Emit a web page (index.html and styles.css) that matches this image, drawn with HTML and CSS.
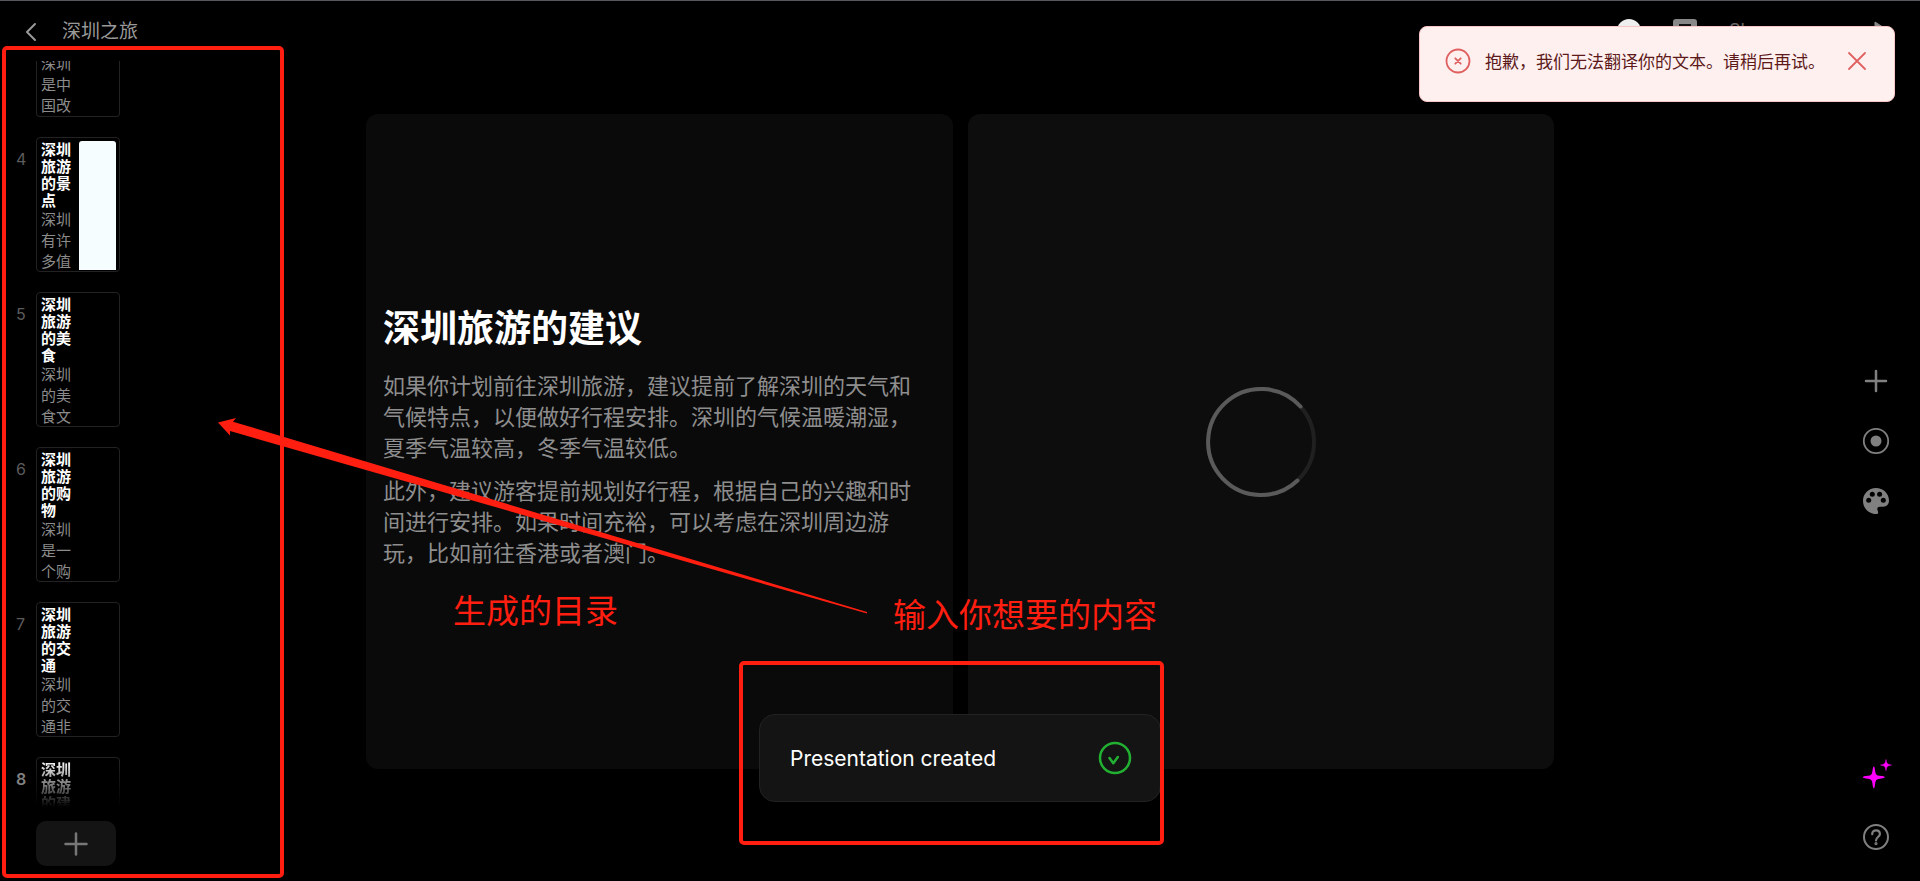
FILE: index.html
```html
<!DOCTYPE html>
<html lang="zh-CN">
<head>
<meta charset="utf-8">
<title>深圳之旅</title>
<link rel="stylesheet" href="styles.css">
</head>
<body>
<div class="app">
  <aside class="sidebar">
    <header class="topbar">
      <button class="icon-btn back" aria-label="Back"><svg width="12" height="20" viewBox="0 0 12 20"><path d="M10 2 2 10l8 8" fill="none" stroke="currentColor" stroke-width="2" stroke-linecap="round" stroke-linejoin="round"/></svg></button>
      <h1 class="deck-title">深圳之旅</h1>
    </header>
    <ol class="slides">
      <li class="slide"><span class="num"></span><div class="thumb cut"><p class="thumb-body">深圳是中国改</p></div></li>
      <li class="slide"><span class="num">4</span><div class="thumb"><div><h2 class="thumb-title">深圳旅游的景点</h2><p class="thumb-body">深圳有许多值</p></div><i class="thumb-image"></i></div></li>
      <li class="slide"><span class="num">5</span><div class="thumb"><div><h2 class="thumb-title">深圳旅游的美食</h2><p class="thumb-body">深圳的美食文</p></div></div></li>
      <li class="slide"><span class="num">6</span><div class="thumb"><div><h2 class="thumb-title">深圳旅游的购物</h2><p class="thumb-body">深圳是一个购</p></div></div></li>
      <li class="slide"><span class="num">7</span><div class="thumb"><div><h2 class="thumb-title">深圳旅游的交通</h2><p class="thumb-body">深圳的交通非</p></div></div></li>
      <li class="slide"><span class="num current">8</span><div class="thumb fading"><div><h2 class="thumb-title">深圳旅游的建</h2></div></div></li>
    </ol>
    <button class="add-slide" aria-label="Add slide"><svg width="24" height="24" viewBox="0 0 24 24"><path d="M12 1.500v21M1.500 12h21" stroke="currentColor" stroke-width="2.500" stroke-linecap="round"/></svg></button>
  </aside>

  <main class="stage">
    <section class="panel text-panel">
      <h2 class="heading">深圳旅游的建议</h2>
      <p class="para">如果你计划前往深圳旅游，建议提前了解深圳的天气和气候特点，以便做好行程安排。深圳的气候温暖潮湿，夏季气温较高，冬季气温较低。</p>
      <p class="para">此外，建议游客提前规划好行程，根据自己的兴趣和时间进行安排。如果时间充裕，可以考虑在深圳周边游玩，比如前往香港或者澳门。</p>
    </section>
    <section class="panel media-panel">
      <svg width="110" height="110" viewBox="0 0 110 110" fill="none" stroke-width="4" stroke-linecap="round"><circle cx="55" cy="55" r="53" stroke="#202020"/><path d="M91.500 93.500A53 53 0 1 1 94.500 19.500" stroke="#5a5a5a"/></svg>
    </section>
  </main>

  <aside class="rail">
    <div class="actions">
      <span class="avatar"></span>
      <button class="icon-btn" aria-label="Comments"><svg width="24" height="24" viewBox="0 0 24 24"><path d="M3 0h18a3 3 0 0 1 3 3v14a3 3 0 0 1-3 3H9l-5 4v-4H3a3 3 0 0 1-3-3V3a3 3 0 0 1 3-3Z" fill="#888"/><path d="M6 6h12M6 11h12" stroke="#111" stroke-width="2"/></svg></button>
      <button class="share">Share</button>
      <button class="icon-btn play" aria-label="Play"><svg width="16" height="20" viewBox="0 0 16 20"><path d="M1 1l14 9-14 9Z" fill="#888" stroke="#888" stroke-linejoin="round"/></svg></button>
    </div>
    <div class="tools">
      <button class="icon-btn" aria-label="Add"><svg width="28" height="28" viewBox="0 0 28 28"><path d="M14 4v20M4 14h20" stroke="currentColor" stroke-width="2.500" stroke-linecap="round"/></svg></button>
      <button class="icon-btn" aria-label="Record"><svg width="28" height="28" viewBox="0 0 28 28"><circle cx="14" cy="14" r="12.200" fill="none" stroke="currentColor" stroke-width="1.800"/><circle cx="14" cy="14" r="5.500" fill="currentColor"/></svg></button>
      <button class="icon-btn" aria-label="Theme"><svg width="28" height="28" viewBox="0 0 28 28"><path d="M14 1C6.600 1 1 6.600 1 14c0 7.200 5.700 13 13 13 1.300 0 2.200-.6 2.200-1.600 0-1.100-.9-2-.9-3.400 0-1.400 1-2.200 2.400-2.200h3.500c3.500 0 5.800-2.500 5.800-6.200C27 6.400 21 1 14 1Z" fill="currentColor"/><g fill="#000"><circle cx="6.700" cy="13.200" r="2.500"/><circle cx="10.300" cy="7.200" r="2.500"/><circle cx="17.600" cy="7.200" r="2.500"/><circle cx="21.300" cy="13.200" r="2.500"/></g></svg></button>
    </div>
    <div class="tools bottom">
      <button class="icon-btn" aria-label="AI"><svg width="28" height="28" viewBox="0 0 28 28" fill="#f0f"><path d="M11.800 3.500c.7 0 1 2 1.400 4.700.3 3 1.300 4.200 4.300 4.600 3.500.4 5.300.7 5.300 1.500s-1.800 1-5.300 1.400c-3 .4-4 1.600-4.300 4.600-.4 3.200-.7 5-1.400 5s-1-1.800-1.400-5c-.3-3-1.300-4.200-4.300-4.600-3.500-.4-5.300-.6-5.300-1.400s1.800-1.100 5.300-1.500c3-.4 4-1.600 4.300-4.600.4-2.700.7-4.700 1.400-4.700Z"/><path d="M24 -3.500c.5 3.900 1.300 4.900 5.500 5.600-4.200.7-5 1.700-5.500 5.600-.5-3.900-1.300-4.900-5.500-5.600 4.200-.7 5-1.700 5.500-5.600Z" stroke="#f0f" stroke-width=".5"/></svg></button>
      <button class="icon-btn" aria-label="Help"><svg width="28" height="28" viewBox="0 0 28 28" fill="none" stroke="currentColor" stroke-width="2"><circle cx="14" cy="14" r="12"/><path d="M10.200 11.200c0-2.300 1.700-3.900 3.900-3.900s3.800 1.500 3.800 3.600c0 3-3.900 3.200-3.900 6.500" stroke-width="2.200" stroke-linecap="round"/><circle cx="14" cy="20.600" r=".6"/></svg></button>
    </div>
  </aside>
</div>

<div class="toast" role="status">
  <span>Presentation created</span>
  <svg width="34" height="34" viewBox="0 0 34 34" fill="none" stroke="#22b032" stroke-width="2.500" stroke-linecap="round" stroke-linejoin="round"><circle cx="17" cy="17" r="15"/><path d="M11.500 17l3.800 5.200 4.500-6.200"/></svg>
</div>

<div class="alert" role="alert">
  <svg width="26" height="26" viewBox="0 0 26 26" fill="none" stroke="#e06060" stroke-width="1.800" stroke-linecap="round"><circle cx="13" cy="13" r="11.500"/><path d="M10.300 10.300l5.400 5.400M15.700 10.300l-5.400 5.400"/></svg>
  <span class="alert-text">抱歉，我们无法翻译你的文本。请稍后再试。</span>
  <button class="icon-btn close" aria-label="关闭"><svg width="18" height="18" viewBox="0 0 18 18"><path d="M1 1l16 16M17 1L1 17" stroke="#e06060" stroke-width="1.800" stroke-linecap="round"/></svg></button>
</div>

<div class="frame frame-list"></div>
<div class="frame frame-toast"></div>
<svg class="arrow" width="650" height="196" viewBox="0 0 650 196"><path d="M0 4.500 18 0l-3 3.700L649 194v1.500L12 13v4.500Z" fill="#ff1e10"/></svg>
<span class="note note-list">生成的目录</span>
<span class="note note-input">输入你想要的内容</span>
</body>
</html>
```
FILE: styles.css
```css
* { box-sizing: border-box; }

body {
  margin: 0;
  background: #000;
  color: #999;
  font-family: Inter, "Noto Sans CJK SC", sans-serif;
  overflow: hidden;
}

h1, h2, p, ol { margin: 0; padding: 0; }
svg { display: block; overflow: visible; }
button { border: 0; padding: 0; background: none; color: inherit; font: inherit; }

.app {
  display: grid;
  grid-template-columns: 366px 1fr 366px;
  height: 100vh;
  border-top: 1px solid #56585c;
}

.sidebar {
  display: flex;
  flex-direction: column;
  min-height: 0;
  padding-bottom: 15px;
}
.topbar {
  display: flex;
  align-items: center;
  gap: 25px;
  height: 60px;
  flex: none;
  padding: 2px 0 0 25px;
}
.deck-title { font-size: 19px; font-weight: 400; line-height: 28px; }

.slides {
  flex: 1;
  min-height: 0;
  overflow: hidden;
  list-style: none;
  display: flex;
  flex-direction: column;
  gap: 20px;
}
.slide { display: flex; align-items: flex-start; padding-left: 16px; }
.num { width: 20px; padding-top: 12px; font-size: 16px; line-height: 20px; color: #5c5c5c; }
.current { color: #808080; font-weight: 600; }
.thumb {
  display: flex;
  gap: 5px;
  width: 84px;
  height: 135px;
  overflow: hidden;
  padding: 3px 3px 0 4px;
  border: 1px solid #222;
  border-radius: 4px;
}
.thumb > div { width: 33px; flex: none; }
.thumb-title { width: 32px; font-size: 15px; font-weight: 700; line-height: 17px; color: #fff; }
.thumb-body { width: 32px; font-size: 15px; line-height: 21px; color: #8c8c8c; }
.thumb-image { width: 37px; height: 129px; flex: none; border-radius: 3px 3px 0 0; background: #f5fdff; }
.cut { height: 56px; padding-top: 0; border-top: 0; border-radius: 0 0 4px 4px; align-items: flex-end; }
.fading { height: 52px; border-bottom: 0; -webkit-mask-image: linear-gradient(#000 4px, transparent 50px); mask-image: linear-gradient(#000 4px, transparent 50px); }

.add-slide {
  display: grid;
  place-items: center;
  flex: none;
  width: 80px;
  height: 45px;
  margin: 12px 0 0 36px;
  border-radius: 10px;
  background: #141414;
  color: #777;
}

.stage { display: grid; grid-template-columns: 1fr 1fr; gap: 15px; padding: 113px 0 112px; }
.panel {
  display: flex;
  flex-direction: column;
  justify-content: center;
  border-radius: 12px;
}
.text-panel { gap: 12px; padding: 0 34px 8px 17px; background: #0a0a0a; }
.media-panel { align-items: center; background: #0d0d0d; }
.heading { margin-bottom: 8px; font-size: 37px; font-weight: 700; line-height: 44px; color: #fff; }
.para { font-size: 22px; line-height: 31px; color: #8e8e8e; }

.rail {
  display: grid;
  grid-template-rows: 1fr auto 1fr;
  padding: 18px 30px;
  color: #808080;
}
.actions { display: flex; align-items: center; gap: 32px; height: 24px; padding-left: 33px; }
.avatar { width: 24px; height: 24px; border-radius: 50%; background: #eee; }
.share { font-size: 18px; line-height: 24px; color: #666; }
.play { margin-left: auto; }
.tools { display: flex; flex-direction: column; align-items: flex-end; gap: 32px; }
.bottom { align-self: end; padding-bottom: 12px; }

.toast {
  position: absolute;
  left: 50%;
  bottom: 79px;
  transform: translateX(-50%);
  display: flex;
  align-items: center;
  justify-content: space-between;
  width: 402px;
  padding: 26px 28px 26px 30px;
  border: 1px solid #222;
  border-radius: 16px;
  background: #141414;
  color: #fff;
  font-size: 21px;
  line-height: 33px;
}

.alert {
  position: absolute;
  top: 26px;
  right: 25px;
  display: flex;
  align-items: center;
  width: 476px;
  padding: 21px 28px 27px 25px;
  border: 1px solid #f9c4c4;
  border-radius: 8px;
  background: #fff0f0;
  color: #5c1a1a;
}
.alert-text { margin-left: 14px; font-family: "Noto Sans CJK SC", sans-serif; font-size: 17px; font-weight: 400; line-height: 26px; white-space: nowrap; }
.close { margin-left: auto; }

.frame { position: absolute; border: 4px solid #ff1e10; border-radius: 5px; }
.frame-list { left: 2px; top: 46px; bottom: 3px; width: 282px; }
.frame-toast { left: 739px; top: 661px; width: 425px; height: 184px; }
.arrow { position: absolute; left: 218px; top: 418px; }
.note { position: absolute; color: #ff1e10; font-size: 33px; line-height: 40px; white-space: nowrap; }
.note-list { left: 453px; top: 591px; }
.note-input { left: 893px; top: 595px; }
```
